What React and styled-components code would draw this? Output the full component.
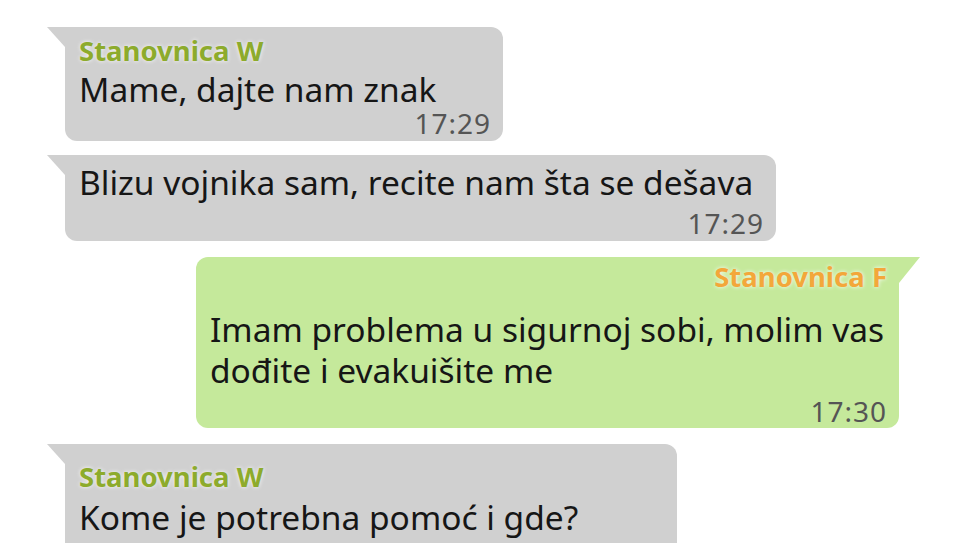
import React from "react";
import styled, { createGlobalStyle, css } from "styled-components";

const Global = createGlobalStyle`
  html, body { margin: 0; padding: 0; background: #ffffff; }
  body { font-family: "Noto Sans", "Open Sans", sans-serif; overflow: hidden; }
`;

const Chat = styled.div`
  width: 965px;
  height: 543px;
  overflow: hidden;
  box-sizing: border-box;
  display: flex;
  flex-direction: column;
`;

const Bubble = styled.div`
  position: relative;
  box-sizing: border-box;
  width: ${(p) => p.$w}px;
  margin-top: ${(p) => p.$top}px;
  padding: ${(p) => p.$pt}px 12px ${(p) => p.$pb}px 14px;
  display: flex;
  flex-direction: column;
  flex-shrink: 0;
  align-self: flex-start;
  ${(p) =>
    p.$out
      ? css`
          margin-left: 196px;
          background: #c5e99b;
          border-radius: 12px 0 12px 12px;
          &::before {
            content: "";
            position: absolute;
            top: 0;
            right: -21px;
            width: 21px;
            height: 26px;
            background: #c5e99b;
            clip-path: polygon(0 0, 100% 0, 0 100%);
          }
        `
      : css`
          margin-left: 65px;
          background: #d0d0d0;
          border-radius: 0 12px 12px 12px;
          &::before {
            content: "";
            position: absolute;
            top: 0;
            left: -18px;
            width: 18px;
            height: 20px;
            background: #d0d0d0;
            clip-path: polygon(0 0, 100% 0, 100% 100%);
          }
        `}
`;

const Name = styled.div`
  font-weight: 700;
  font-size: 27.5px;
  line-height: 30px;
  color: ${(p) => (p.$out ? "#f3a73a" : "#8dab2c")};
  text-align: ${(p) => (p.$out ? "right" : "left")};
  text-shadow: 0 0 4px rgba(255, 255, 255, 0.9);
  margin-bottom: ${(p) => p.$gap}px;
`;

const Text = styled.div`
  font-size: 33.5px;
  line-height: 41px;
  color: #161616;
  white-space: pre;
`;

const Time = styled.div`
  font-size: 28px;
  line-height: 30px;
  letter-spacing: 1px;
  margin-top: ${(p) => p.$mt}px;
  color: #555555;
  text-align: right;
`;

const messages = [
  { name: "Stanovnica W", text: "Mame, dajte nam znak", time: "17:29", w: 438, top: 27, pt: 9, gap: 3, mt: -2, pb: 3 },
  { text: "Blizu vojnika sam, recite nam šta se dešava", time: "17:29", w: 711, top: 14, pt: 7, mt: 5, pb: 3 },
  {
    out: true,
    name: "Stanovnica F",
    text: "Imam problema u sigurnoj sobi, molim vas\ndođite i evakuišite me",
    time: "17:30",
    w: 703,
    top: 16,
    pt: 5,
    gap: 17,
    mt: 5,
    pb: 2,
  },
  { name: "Stanovnica W", text: "Kome je potrebna pomoć i gde?", w: 612, top: 16, pt: 18, gap: 5, pb: 40 },
];

export default function App() {
  return (
    <>
      <Global />
      <Chat>
        {messages.map((m, i) => (
          <Bubble key={i} $out={m.out} $w={m.w} $top={m.top} $pt={m.pt} $pb={m.pb}>
            {m.name && (
              <Name $out={m.out} $gap={m.gap}>
                {m.name}
              </Name>
            )}
            <Text>{m.text}</Text>
            {m.time && <Time $mt={m.mt}>{m.time}</Time>}
          </Bubble>
        ))}
      </Chat>
    </>
  );
}
